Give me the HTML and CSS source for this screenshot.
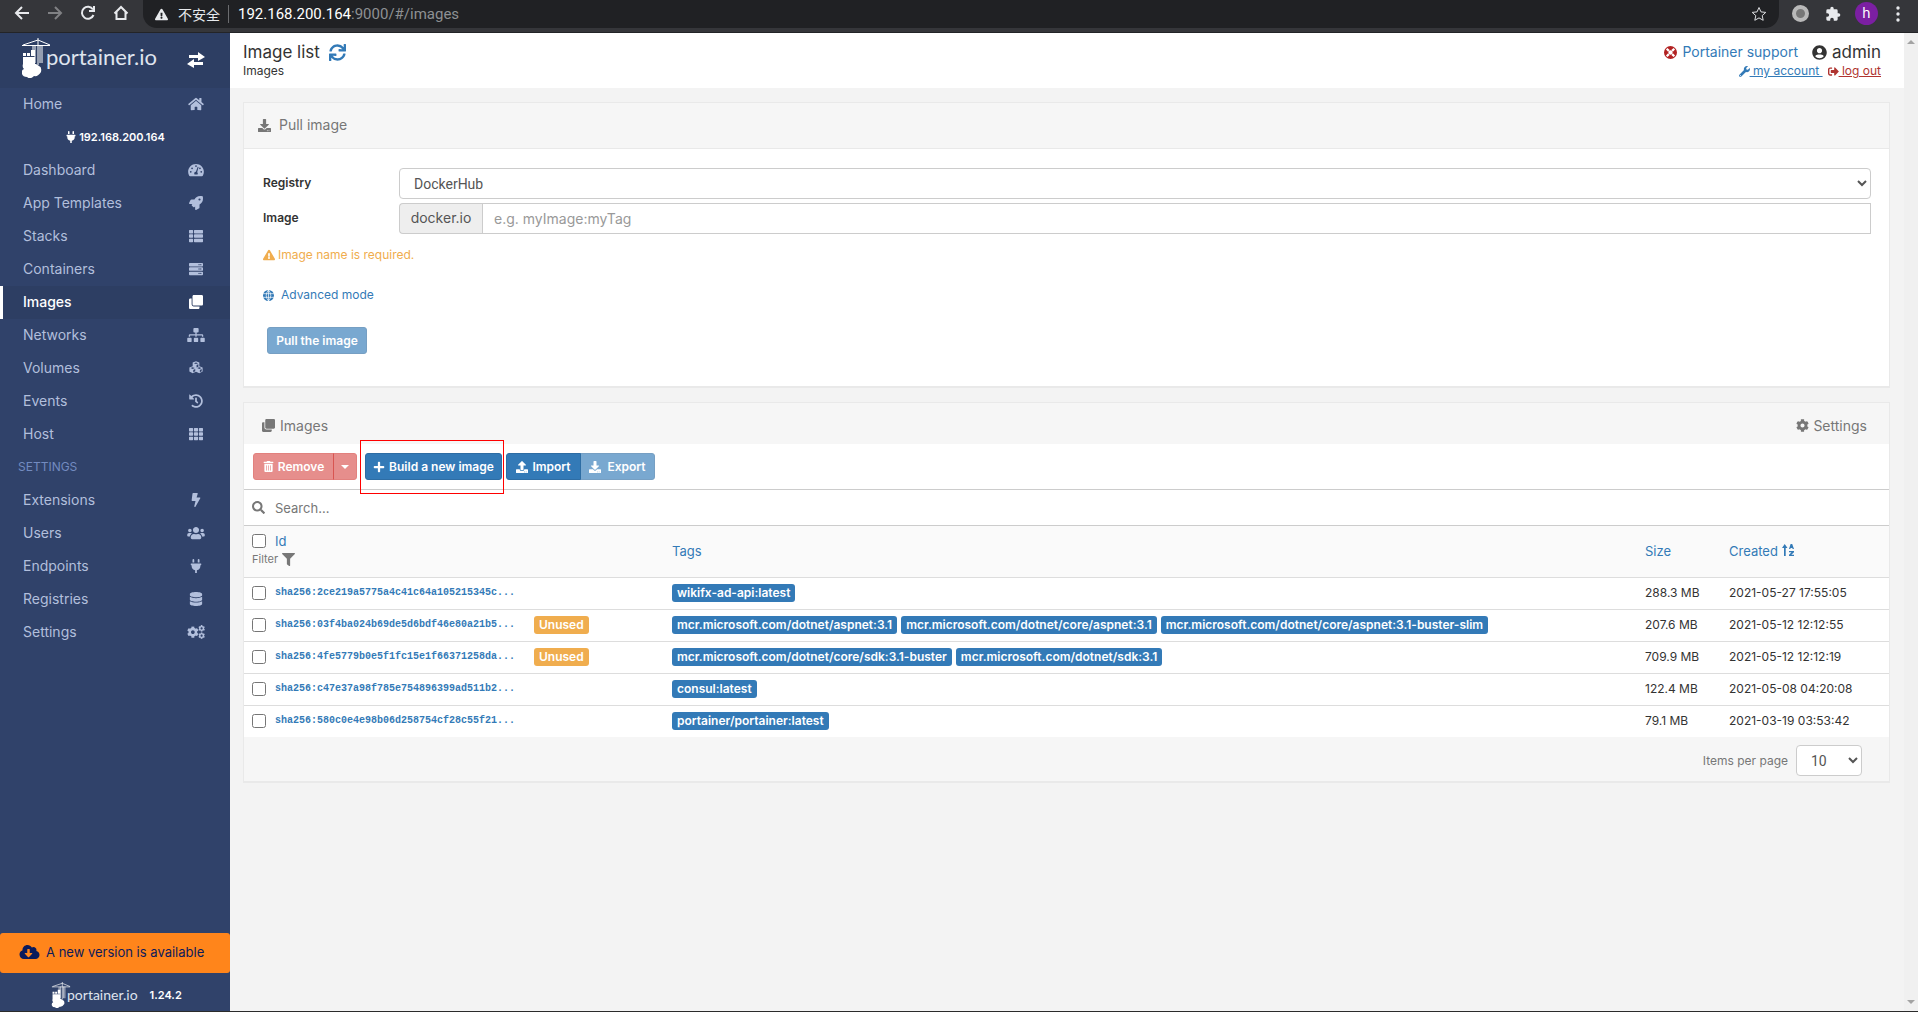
FILE: index.html
```html
<!DOCTYPE html>
<html lang="en">
<head>
<meta charset="utf-8">
<title>Portainer</title>
<link rel="stylesheet" href="styles.css">
</head>
<body>
<svg class="sprite" aria-hidden="true">
  <symbol id="home" viewBox="0 0 576 512"><path d="M280.37 148.26L96 300.11V464a16 16 0 0 0 16 16l112.06-.29a16 16 0 0 0 15.92-16V368a16 16 0 0 1 16-16h64a16 16 0 0 1 16 16v95.64a16 16 0 0 0 16 16.05L464 480a16 16 0 0 0 16-16V300L295.67 148.26a12.19 12.19 0 0 0-15.3 0zM571.6 251.47L488 182.56V44.05a12 12 0 0 0-12-12h-56a12 12 0 0 0-12 12v72.61L318.47 43a48 48 0 0 0-61 0L4.34 251.47a12 12 0 0 0-1.6 16.9l25.5 31A12 12 0 0 0 45.15 301l235.22-193.74a12.19 12.19 0 0 1 15.3 0L530.9 301a12 12 0 0 0 16.9-1.6l25.5-31a12 12 0 0 0-1.7-16.93z"/></symbol>
  <symbol id="plug" viewBox="0 0 384 512"><path d="M320 32a32 32 0 0 0-64 0v96h64Zm48 128H16A16 16 0 0 0 0 176v32a16 16 0 0 0 16 16H32v32A160.07 160.07 0 0 0 160 412.8V512h64V412.8A160.07 160.07 0 0 0 352 256V224h16a16 16 0 0 0 16-16V176A16 16 0 0 0 368 160ZM128 32a32 32 0 0 0-64 0v96h64Z"/></symbol>
  <symbol id="dash" viewBox="0 0 576 512"><path fill-rule="evenodd" d="M288 32C129 32 0 161 0 320c0 53 14 102 39 145 6 9 16 15 28 15h442c12 0 22-6 28-15 25-43 39-92 39-145C576 161 447 32 288 32zM96 288a32 32 0 1 1 0 64 32 32 0 0 1 0-64zm48-128a32 32 0 1 1 0 64 32 32 0 0 1 0-64zM288 80a32 32 0 1 1 0 64 32 32 0 0 1 0-64zm192 208a32 32 0 1 1 0 64 32 32 0 0 1 0-64zm-48-128a32 32 0 1 1 0 64 32 32 0 0 1 0-64zM352 140l30 10-52 186c30 20 28 60 14 80H232c-24-48 6-96 52-94z"/></symbol>
  <symbol id="rocket" viewBox="0 0 512 512"><path d="M505.1 19.1c-1.2-5.5-6.7-11-12.2-12.2C460.7 0 435.5 0 410.4 0 307.200 0 245.300 55.200 199 128H94.800c-16.300 0-35.600 11.900-42.900 26.500L2.500 253.300A28.400 28.400 0 0 0 0 264a24 24 0 0 0 24 24h103.800l-22.500 22.500c-11.300 11.300-13 32.200 0 45.200l50.900 50.900c11.200 11.200 32.200 13.200 45.300 0l22.500-22.500V488a24 24 0 0 0 24 24 28.600 28.600 0 0 0 10.700-2.500l98.700-49.400c14.700-7.300 26.600-26.500 26.600-42.900V312.800c72.600-46.300 128-108.400 128-211.100 0-25.200 0-50.400-6.900-82.600zM384 168a40 40 0 1 1 40-40 40 40 0 0 1-40 40z"/></symbol>
  <symbol id="thlist" viewBox="0 0 512 512"><path d="M24 32h102q24 0 24 24v80q0 24-24 24H24q-24 0-24-24V56q0-24 24-24zM206 32h282q24 0 24 24v80q0 24-24 24H206q-24 0-24-24V56q0-24 24-24zM24 192h102q24 0 24 24v80q0 24-24 24H24q-24 0-24-24v-80q0-24 24-24zM206 192h282q24 0 24 24v80q0 24-24 24H206q-24 0-24-24v-80q0-24 24-24zM24 352h102q24 0 24 24v80q0 24-24 24H24q-24 0-24-24v-80q0-24 24-24zM206 352h282q24 0 24 24v80q0 24-24 24H206q-24 0-24-24v-80q0-24 24-24z"/></symbol>
  <symbol id="th" viewBox="0 0 512 512"><path d="M24 32h102q24 0 24 24v80q0 24-24 24H24q-24 0-24-24V56q0-24 24-24zM205 32h102q24 0 24 24v80q0 24-24 24H205q-24 0-24-24V56q0-24 24-24zM386 32h102q24 0 24 24v80q0 24-24 24H386q-24 0-24-24V56q0-24 24-24zM24 192h102q24 0 24 24v80q0 24-24 24H24q-24 0-24-24v-80q0-24 24-24zM205 192h102q24 0 24 24v80q0 24-24 24H205q-24 0-24-24v-80q0-24 24-24zM386 192h102q24 0 24 24v80q0 24-24 24H386q-24 0-24-24v-80q0-24 24-24zM24 352h102q24 0 24 24v80q0 24-24 24H24q-24 0-24-24v-80q0-24 24-24zM205 352h102q24 0 24 24v80q0 24-24 24H205q-24 0-24-24v-80q0-24 24-24zM386 352h102q24 0 24 24v80q0 24-24 24H386q-24 0-24-24v-80q0-24 24-24z"/></symbol>
  <symbol id="server" viewBox="0 0 512 512"><path fill-rule="evenodd" d="M32 32h448a32 32 0 0 1 32 32v64a32 32 0 0 1-32 32H32a32 32 0 0 1-32-32V64a32 32 0 0 1 32-32zM432 72a24 24 0 1 0 0 48 24 24 0 0 0 0-48zm-64 0a24 24 0 1 0 0 48 24 24 0 0 0 0-48zM32 192h448a32 32 0 0 1 32 32v64a32 32 0 0 1-32 32H32a32 32 0 0 1-32-32v-64a32 32 0 0 1 32-32zm400 40a24 24 0 1 0 0 48 24 24 0 0 0 0-48zm-64 0a24 24 0 1 0 0 48 24 24 0 0 0 0-48zM32 352h448a32 32 0 0 1 32 32v64a32 32 0 0 1-32 32H32a32 32 0 0 1-32-32v-64a32 32 0 0 1 32-32zm400 40a24 24 0 1 0 0 48 24 24 0 0 0 0-48zm-64 0a24 24 0 1 0 0 48 24 24 0 0 0 0-48z"/></symbol>
  <symbol id="clone" viewBox="0 0 512 512"><path d="M464 0c26.510 0 48 21.490 48 48v288c0 26.510-21.490 48-48 48H176c-26.510 0-48-21.490-48-48V48c0-26.510 21.490-48 48-48h288M176 416c-44.112 0-80-35.888-80-80V128H48c-26.510 0-48 21.490-48 48v288c0 26.510 21.490 48 48 48h288c26.510 0 48-21.490 48-48v-48H176z"/></symbol>
  <symbol id="sitemap" viewBox="0 0 640 512"><path d="M128 352H32q-32 0-32 32v96q0 32 32 32h96q32 0 32-32v-96q0-32-32-32zm-24-80h192v48h48v-48h192v48h48v-57q0-39-39-39H344v-64h40q32 0 32-32V32q0-32-32-32H256q-32 0-32 32v96q0 32 32 32h40v64H95q-39 0-39 39v57h48zm264 80h-96q-32 0-32 32v96q0 32 32 32h96q32 0 32-32v-96q0-32-32-32zm240 0h-96q-32 0-32 32v96q0 32 32 32h96q32 0 32-32v-96q0-32-32-32z"/></symbol>
  <symbol id="cubes" viewBox="0 0 512 512"><path fill-rule="evenodd" d="M256 10l122 48v132l120 48v150l-120 60-122-58-122 58-120-60V238l120-48V58zM256 52l-76 28 76 30 76-30zM276 150v92l66-30v-92zM134 226l-78 30 78 32 78-32zM378 226l-78 30 78 32 78-32zM156 326v84l72-36v-80zM398 326v84l66-34v-80z"/></symbol>
  <symbol id="history" viewBox="0 0 512 512"><path d="M504 255.531c.253 136.640-111.180 248.372-247.820 248.468-59.015.042-113.223-20.530-155.822-54.911-11.077-8.940-11.905-25.541-1.839-35.607l11.267-11.267c8.609-8.609 22.353-9.551 31.891-1.984C173.062 425.135 212.781 440 256 440c101.705 0 184-82.311 184-184 0-101.705-82.311-184-184-184-48.814 0-93.149 18.969-126.068 49.932l50.754 50.754c10.080 10.080 2.941 27.314-11.313 27.314H24c-8.837 0-16-7.163-16-16V38.627c0-14.254 17.234-21.393 27.314-11.314l49.372 49.372C129.209 34.136 189.552 8 256 8c136.810 0 247.747 110.780 248 247.531zm-180.912 78.784l9.823-12.630c8.138-10.463 6.253-25.542-4.210-33.679L288 256.349V152c0-13.255-10.745-24-24-24h-16c-13.255 0-24 10.745-24 24v135.651l65.409 50.874c10.463 8.137 25.541 6.253 33.679-4.210z"/></symbol>
  <symbol id="bolt" viewBox="0 0 320 512"><path d="M296 160H180.600l42.600-129.800C227.200 15 215.700 0 200 0H56C44 0 33.800 8.900 32.200 20.800l-32 240C-1.700 275.200 9.500 288 24 288h118.700L96.600 482.500c-3.600 15.200 8 29.500 23.300 29.500 8.400 0 16.400-4.400 20.800-12l176-304c9.300-15.900-2.200-36-20.700-36z"/></symbol>
  <symbol id="users" viewBox="0 0 640 512"><path d="M96 224c35.300 0 64-28.700 64-64s-28.700-64-64-64-64 28.700-64 64 28.700 64 64 64zm448 0c35.300 0 64-28.700 64-64s-28.700-64-64-64-64 28.700-64 64 28.700 64 64 64zm32 32h-64c-17.600 0-33.500 7.100-45.100 18.600 40.300 22.100 68.900 62 75.100 109.400h66c17.700 0 32-14.300 32-32v-32c0-35.300-28.700-64-64-64zm-256 0c61.900 0 112-50.100 112-112S381.900 32 320 32 208 82.100 208 144s50.100 112 112 112zm76.800 32h-8.300c-20.800 10-43.900 16-68.500 16s-47.600-6-68.500-16h-8.300C179.600 288 128 339.600 128 403.200V432c0 26.500 21.500 48 48 48h288c26.500 0 48-21.500 48-48v-28.800c0-63.600-51.600-115.200-115.200-115.200zm-223.700-13.400C161.500 263.100 145.600 256 128 256H64c-35.300 0-64 28.700-64 64v32c0 17.700 14.300 32 32 32h65.900c6.300-47.400 34.900-87.300 75.200-109.400z"/></symbol>
  <symbol id="database" viewBox="0 0 448 512"><path d="M448 73.143v45.714C448 159.143 347.667 192 224 192S0 159.143 0 118.857V73.143C0 32.857 100.333 0 224 0s224 32.857 224 73.143zM448 176v102.857C448 319.143 347.667 352 224 352S0 319.143 0 278.857V176c48.125 33.143 136.208 48.572 224 48.572S399.874 209.143 448 176zm0 160v102.857C448 479.143 347.667 512 224 512S0 479.143 0 438.857V336c48.125 33.143 136.208 48.572 224 48.572S399.874 369.143 448 336z"/></symbol>
  <symbol id="cog" viewBox="0 0 512 512"><path d="M487.400 315.700l-42.600-24.600c4.300-23.200 4.300-47 0-70.200l42.600-24.600c4.900-2.800 7.100-8.600 5.500-14-11.100-35.600-30-67.800-54.700-94.600-3.800-4.100-10-5.100-14.800-2.300L380.800 110c-17.900-15.400-38.500-27.300-60.800-35.100V25.800c0-5.600-3.900-10.500-9.400-11.700-36.700-8.200-74.300-7.800-109.200 0-5.500 1.200-9.400 6.100-9.400 11.700V75c-22.200 7.900-42.800 19.800-60.800 35.100L88.700 85.500c-4.900-2.800-11-1.900-14.800 2.300-24.700 26.700-43.600 58.900-54.700 94.600-1.700 5.400.6 11.200 5.500 14L67.300 221c-4.300 23.200-4.300 47 0 70.200l-42.600 24.600c-4.900 2.800-7.100 8.600-5.500 14 11.100 35.600 30 67.800 54.700 94.600 3.800 4.100 10 5.100 14.800 2.300l42.600-24.600c17.900 15.400 38.500 27.300 60.800 35.100v49.200c0 5.600 3.900 10.500 9.400 11.700 36.700 8.200 74.300 7.800 109.200 0 5.500-1.200 9.400-6.100 9.400-11.700v-49.200c22.200-7.900 42.800-19.800 60.800-35.100l42.600 24.600c4.900 2.800 11 1.900 14.800-2.300 24.700-26.700 43.600-58.900 54.700-94.600 1.500-5.500-.7-11.300-5.600-14.100zM256 336c-44.100 0-80-35.900-80-80s35.900-80 80-80 80 35.900 80 80-35.900 80-80 80z"/></symbol>
  <symbol id="cogs" viewBox="0 0 640 512"><use href="#cog" x="-10" y="46" width="430" height="430"/><use href="#cog" x="400" y="0" width="250" height="250"/><use href="#cog" x="400" y="264" width="250" height="250"/></symbol>
  <symbol id="download" viewBox="0 0 512 512"><path d="M216 0h80c13.300 0 24 10.700 24 24v168h87.700c17.800 0 26.700 21.500 14.100 34.100L269.700 378.300c-7.500 7.500-19.800 7.500-27.300 0L90.100 226.100c-12.600-12.600-3.700-34.100 14.100-34.100H192V24c0-13.300 10.700-24 24-24zm296 376v112c0 13.300-10.700 24-24 24H24c-13.300 0-24-10.700-24-24V376c0-13.300 10.700-24 24-24h146.700l49 49c20.100 20.100 52.500 20.100 72.600 0l49-49H488c13.300 0 24 10.700 24 24zm-124 88c0-11-9-20-20-20s-20 9-20 20 9 20 20 20 20-9 20-20zm64 0c0-11-9-20-20-20s-20 9-20 20 9 20 20 20 20-9 20-20z"/></symbol>
  <symbol id="upload" viewBox="0 0 512 512"><path d="M296 384h-80c-13.300 0-24-10.700-24-24V192h-87.700c-17.800 0-26.700-21.500-14.100-34.100L242.300 5.700c7.500-7.500 19.800-7.500 27.300 0l152.200 152.200c12.600 12.600 3.700 34.100-14.100 34.100H320v168c0 13.300-10.700 24-24 24zm216-8v112c0 13.300-10.700 24-24 24H24c-13.300 0-24-10.700-24-24V376c0-13.300 10.700-24 24-24h136v8c0 30.900 25.100 56 56 56h80c30.900 0 56-25.100 56-56v-8h136c13.300 0 24 10.700 24 24zm-124 88c0-11-9-20-20-20s-20 9-20 20 9 20 20 20 20-9 20-20zm64 0c0-11-9-20-20-20s-20 9-20 20 9 20 20 20 20-9 20-20z"/></symbol>
  <symbol id="search" viewBox="0 0 512 512"><path d="M505 442.700L405.300 343c-4.500-4.500-10.600-7-17-7H372c27.600-35.300 44-79.700 44-128C416 93.100 322.900 0 208 0S0 93.100 0 208s93.100 208 208 208c48.300 0 92.700-16.400 128-44v16.300c0 6.400 2.500 12.500 7 17l99.700 99.700c9.400 9.400 24.600 9.400 33.900 0l28.300-28.300c9.400-9.400 9.400-24.600.1-34zM208 336c-70.700 0-128-57.200-128-128 0-70.700 57.200-128 128-128 70.700 0 128 57.200 128 128 0 70.700-57.200 128-128 128z"/></symbol>
  <symbol id="filter" viewBox="0 0 512 512"><path d="M487.976 0H24.028C2.710 0-8.047 25.866 7.058 40.971L192 225.941V432c0 7.831 3.821 15.170 10.237 19.662l80 55.980C298.020 518.690 320 507.493 320 487.980V225.941l184.947-184.970C520.021 25.896 509.338 0 487.976 0z"/></symbol>
  <symbol id="plus" viewBox="0 0 448 512"><path d="M416 208H272V64c0-17.670-14.330-32-32-32h-32c-17.670 0-32 14.330-32 32v144H32c-17.670 0-32 14.330-32 32v32c0 17.670 14.330 32 32 32h144v144c0 17.670 14.330 32 32 32h32c17.670 0 32-14.330 32-32V304h144c17.670 0 32-14.330 32-32v-32c0-17.670-14.330-32-32-32z"/></symbol>
  <symbol id="trash" viewBox="0 0 448 512"><path d="M32 464a48 48 0 0 0 48 48h288a48 48 0 0 0 48-48V128H32zm272-256a16 16 0 0 1 32 0v224a16 16 0 0 1-32 0zm-96 0a16 16 0 0 1 32 0v224a16 16 0 0 1-32 0zm-96 0a16 16 0 0 1 32 0v224a16 16 0 0 1-32 0zM432 32H312l-9.400-18.700A24 24 0 0 0 281.100 0H166.800a23.720 23.720 0 0 0-21.400 13.300L136 32H16A16 16 0 0 0 0 48v32a16 16 0 0 0 16 16h416a16 16 0 0 0 16-16V48a16 16 0 0 0-16-16z"/></symbol>
  <symbol id="warning" viewBox="0 0 576 512"><path d="M569.517 440.013C587.975 472.007 564.806 512 527.940 512H48.054c-36.937 0-59.999-40.055-41.577-71.987L246.423 23.985c18.467-32.009 64.720-31.951 83.154 0l239.940 416.028zM288 354c-25.405 0-46 20.595-46 46s20.595 46 46 46 46-20.595 46-46-20.595-46-46-46zm-43.673-165.346l7.418 136c.347 6.364 5.609 11.346 11.982 11.346h48.546c6.373 0 11.635-4.982 11.982-11.346l7.418-136c.375-6.874-5.098-12.654-11.982-12.654h-63.383c-6.884 0-12.356 5.780-11.981 12.654z"/></symbol>
  <symbol id="wrench" viewBox="0 0 512 512"><path d="M507.730 109.100c-2.240-9.030-13.540-12.090-20.120-5.510l-74.360 74.360-67.880-11.310-11.310-67.880 74.360-74.360c6.620-6.620 3.430-17.900-5.660-20.160-47.380-11.740-99.550.91-136.580 37.930-39.640 39.640-50.550 97.100-34.050 147.200L18.740 402.760c-24.990 24.990-24.990 65.510 0 90.500 24.990 24.990 65.510 24.990 90.500 0l213.210-213.210c50.120 16.710 107.470 5.680 147.370-34.220 37.070-37.070 49.700-89.320 37.910-136.730zM64 472c-13.250 0-24-10.750-24-24 0-13.260 10.750-24 24-24s24 10.740 24 24c0 13.250-10.750 24-24 24z"/></symbol>
  <symbol id="signout" viewBox="0 0 512 512"><path d="M497 273L329 441c-15 15-41 4.500-41-17v-96H152c-13.300 0-24-10.700-24-24v-96c0-13.300 10.700-24 24-24h136V88c0-21.400 25.900-32 41-17l168 168c9.300 9.400 9.300 24.600 0 34zM192 436v-40c0-6.600-5.400-12-12-12H96c-17.700 0-32-14.300-32-32V160c0-17.700 14.300-32 32-32h84c6.600 0 12-5.400 12-12V76c0-6.600-5.400-12-12-12H96c-53 0-96 43-96 96v192c0 53 43 96 96 96h84c6.600 0 12-5.400 12-12z"/></symbol>
  <symbol id="sync" viewBox="0 0 512 512"><path d="M440.650 12.570l4 82.770A247.160 247.160 0 0 0 255.830 8C134.730 8 33.910 94.920 12.290 209.820A12 12 0 0 0 24.090 224h49.050a12 12 0 0 0 11.670-9.260 175.910 175.910 0 0 1 317-56.940l-101.460-4.860a12 12 0 0 0-12.570 12v47.410a12 12 0 0 0 12 12H500a12 12 0 0 0 12-12V12a12 12 0 0 0-12-12h-47.370a12 12 0 0 0-11.980 12.570zM255.830 432a175.610 175.610 0 0 1-146-77.800l101.800 4.870a12 12 0 0 0 12.570-12v-47.400a12 12 0 0 0-12-12H12a12 12 0 0 0-12 12V500a12 12 0 0 0 12 12h47.350a12 12 0 0 0 12-12.600l-4.150-82.570A247.170 247.170 0 0 0 255.830 504c121.110 0 221.930-86.920 243.550-201.820a12 12 0 0 0-11.800-14.180h-49.050a12 12 0 0 0-11.670 9.260A175.860 175.860 0 0 1 255.830 432z"/></symbol>
  <symbol id="user" viewBox="0 0 496 512"><path d="M248 8C111 8 0 119 0 256s111 248 248 248 248-111 248-248S385 8 248 8zm0 96c48.600 0 88 39.400 88 88s-39.400 88-88 88-88-39.400-88-88 39.400-88 88-88zm0 344c-58.700 0-111.300-26.600-146.500-68.200 18.800-35.400 55.600-59.800 98.500-59.800 2.400 0 4.800.4 7.100 1.100 13 4.200 26.600 6.900 40.900 6.900 14.300 0 28-2.700 40.900-6.900 2.300-.7 4.700-1.100 7.100-1.100 42.900 0 79.700 24.400 98.500 59.800C359.300 421.400 306.700 448 248 448z"/></symbol>
  <symbol id="cloud" viewBox="0 0 640 512"><path d="M537.600 226.600c4.100-10.700 6.400-22.400 6.400-34.600 0-53-43-96-96-96-19.700 0-38.100 6-53.300 16.200C367 64.200 315.300 32 256 32c-88.400 0-160 71.600-160 160 0 2.700.1 5.400.2 8.100C40.200 219.800 0 273.200 0 336c0 79.500 64.500 144 144 144h368c70.700 0 128-57.300 128-128 0-61.900-44-113.600-102.400-125.400zm-132.900 88.700L299.300 420.700c-6.200 6.200-16.400 6.200-22.600 0L171.300 315.300c-10.100-10.100-2.900-27.300 11.300-27.300H248V176c0-8.800 7.200-16 16-16h48c8.800 0 16 7.200 16 16v112h65.400c14.200 0 21.400 17.200 11.300 27.300z"/></symbol>
  <symbol id="ring" viewBox="0 0 24 24"><circle cx="12" cy="12" r="8" fill="none" stroke="currentColor" stroke-width="8"/><path stroke="#fff" stroke-width="4" d="M5 5l4 4M19 5l-4 4M5 19l4-4M19 19l-4-4"/></symbol>
  <symbol id="globe" viewBox="0 0 24 24"><circle cx="12" cy="12" r="12"/><path fill="none" stroke="#fff" stroke-width="1.500" d="M0 8h24M0 16h24M12 0v24M12 0q-10 12 0 24M12 0q10 12 0 24"/></symbol>
  <symbol id="swap" viewBox="0 0 18 16"><path d="M2 3h9V0l7 5-7 4V6H2zM16 10H7V7l-7 5 7 4v-3h9z"/></symbol>
  <symbol id="sort" viewBox="0 0 12 12"><path d="M2 12V4H0l2.700-4 2.800 4H3.700v8zM7 5l1.600-5h1.600L12 5h-1.400l-.3-1H8.600l-.3 1zM7 7h5v1.300L9.300 10.800H12V12H7v-1.300l2.500-2.500H7z"/></symbol>
  <symbol id="crane" viewBox="0 0 28 40"><path fill="none" stroke="currentColor" stroke-width="1" d="M16 0v27M13 7v18M18 7v18M20 7v18M0 7.500h28M1 7l15-5 12 5M11 8v5"/><path d="M1 15h3v3H1zM5 15h3v3H5zM9 12h4v6H9zM1 19h12v7H1zM1 26h13l3 2q3 1 2 6-3 5-7 4-4 4-7 1-4 0-5-3-1-4 2-5-2-2-1-5z"/></symbol>
</svg>

<header class="browser">
  <nav class="browser-nav">
    <svg viewBox="0 0 16 16"><path d="M15 8H2M8 2L2 8l6 6"/></svg>
    <svg class="dim" viewBox="0 0 16 16"><path d="M1 8h13M8 2l6 6-6 6"/></svg>
    <svg viewBox="0 0 16 16"><path d="M13.500 10A6 6 0 1 1 13 4.500M14 1v5H9"/></svg>
    <svg viewBox="0 0 16 16"><path d="M1.500 8.500L8 2l6.500 6.500M3.500 7v7h9V7"/></svg>
  </nav>
  <div class="address">
    <svg class="i13"><use href="#warning"/></svg>
    <span class="unsafe">不安全</span>
    <span class="url"><b>192.168.200.164</b>:9000/#/images</span>
    <svg class="star" viewBox="0 0 16 16"><path d="M8 1.500l2 4.400 4.800.5-3.600 3.200 1 4.700L8 11.900l-4.200 2.400 1-4.700L1.200 6.400 6 5.900z"/></svg>
  </div>
  <div class="browser-ext">
    <span class="circle"></span>
    <svg class="puzzle" viewBox="0 0 24 24"><path d="M20.500 11H19V7a2 2 0 0 0-2-2h-4V3.500a2.500 2.500 0 0 0-5 0V5H4a2 2 0 0 0-2 2v3.800h1.500a2.700 2.700 0 0 1 0 5.400H2V20a2 2 0 0 0 2 2h3.800v-1.500a2.700 2.700 0 0 1 5.400 0V22H17a2 2 0 0 0 2-2v-4h1.500a2.500 2.500 0 0 0 0-5z"/></svg>
    <span class="avatar">h</span>
    <svg class="dots" viewBox="0 0 4 16"><circle cx="2" cy="2" r="1.700"/><circle cx="2" cy="8" r="1.700"/><circle cx="2" cy="14" r="1.700"/></svg>
  </div>
</header>

<div class="app">
  <aside class="sidebar">
    <div class="brand">
      <svg class="crane"><use href="#crane"/></svg><span class="brand-name">portainer.io</span>
      <svg class="swap"><use href="#swap"/></svg>
    </div>
    <nav class="menu">
      <a href="#home">Home <svg><use href="#home"/></svg></a>
      <div class="endpoint"><svg class="i12"><use href="#plug"/></svg>192.168.200.164</div>
      <a href="#dashboard">Dashboard <svg><use href="#dash"/></svg></a>
      <a href="#templates">App Templates <svg><use href="#rocket"/></svg></a>
      <a href="#stacks">Stacks <svg><use href="#thlist"/></svg></a>
      <a href="#containers">Containers <svg><use href="#server"/></svg></a>
      <a href="#images" class="active">Images <svg><use href="#clone"/></svg></a>
      <a href="#networks">Networks <svg><use href="#sitemap"/></svg></a>
      <a href="#volumes">Volumes <svg><use href="#cubes"/></svg></a>
      <a href="#events">Events <svg><use href="#history"/></svg></a>
      <a href="#host">Host <svg><use href="#th"/></svg></a>
      <div class="menu-title">SETTINGS</div>
      <a href="#extensions">Extensions <svg><use href="#bolt"/></svg></a>
      <a href="#users">Users <svg><use href="#users"/></svg></a>
      <a href="#endpoints">Endpoints <svg><use href="#plug"/></svg></a>
      <a href="#registries">Registries <svg><use href="#database"/></svg></a>
      <a href="#settings">Settings <svg><use href="#cogs"/></svg></a>
    </nav>
    <a class="update" href="#update"><svg><use href="#cloud"/></svg>A new version is available</a>
    <footer class="side-foot">
      <svg class="crane"><use href="#crane"/></svg><span class="brand-name">portainer.io</span><span class="version">1.24.2</span>
    </footer>
  </aside>

  <main>
    <header class="page-head">
      <div>
        <h1>Image list <a href="#refresh" aria-label="Refresh"><svg><use href="#sync"/></svg></a></h1>
        <p>Images</p>
      </div>
      <div class="account">
        <div class="account-top">
          <a class="support" href="#support"><svg class="red i13"><use href="#ring"/></svg>Portainer support</a>
          <span class="who"><svg><use href="#user"/></svg>admin</span>
        </div>
        <div class="account-links">
          <a href="#account"><svg class="i11"><use href="#wrench"/></svg><u>&nbsp;my account&nbsp;</u></a>
          <a href="#logout" class="red"><svg class="i11"><use href="#signout"/></svg><u>&nbsp;log out</u></a>
        </div>
      </div>
    </header>

    <section class="card pull">
      <h2><svg class="i13"><use href="#download"/></svg>Pull image</h2>
      <form>
        <div class="field">
          <label for="registry">Registry</label>
          <select id="registry"><option>DockerHub</option></select>
        </div>
        <div class="field">
          <label for="image">Image</label>
          <div class="group"><span>docker.io</span><input id="image" type="text" placeholder="e.g. myImage:myTag"></div>
        </div>
        <p class="warn"><svg class="i12"><use href="#warning"/></svg>Image name is required.</p>
        <a class="advanced" href="#advanced"><svg class="i11"><use href="#globe"/></svg>Advanced mode</a>
        <button type="button" class="btn blue" disabled>Pull the image</button>
      </form>
    </section>

    <section class="card list">
      <div class="list-head">
        <h2><svg class="i13"><use href="#clone"/></svg>Images</h2>
        <a href="#table-settings"><svg class="i13"><use href="#cog"/></svg>Settings</a>
      </div>
      <div class="toolbar">
        <div class="btns remove">
          <button type="button" class="btn danger" disabled><svg class="i11"><use href="#trash"/></svg>Remove</button>
          <button type="button" class="btn danger caret" disabled aria-label="More remove options"><i></i></button>
        </div>
        <div class="build">
          <button type="button" class="btn blue"><svg class="i12"><use href="#plus"/></svg>Build a new image</button>
          <span class="mark"></span>
        </div>
        <div class="btns">
          <button type="button" class="btn blue"><svg class="i12"><use href="#upload"/></svg>Import</button>
          <button type="button" class="btn blue export" disabled><svg class="i12"><use href="#download"/></svg>Export</button>
        </div>
      </div>
      <label class="search"><svg class="i13"><use href="#search"/></svg><input type="text" placeholder="Search..." aria-label="Search"></label>
      <table>
        <colgroup><col class="c-id"><col><col class="c-size"><col class="c-date"></colgroup>
        <thead>
          <tr>
            <th><div class="id-cell"><input type="checkbox" aria-label="Select all"><a href="#id">Id</a></div><div class="filter">Filter<svg class="i13"><use href="#filter"/></svg></div></th>
            <th><a href="#tags">Tags</a></th>
            <th><a href="#size">Size</a></th>
            <th><a href="#created">Created <svg class="i12"><use href="#sort"/></svg></a></th>
          </tr>
        </thead>
        <tbody>
          <tr>
            <td><div class="id-cell"><input type="checkbox" aria-label="Select image"><a href="#i1">sha256:2ce219a5775a4c41c64a105215345c...</a></div></td>
            <td><div class="tags"><span>wikifx-ad-api:latest</span></div></td>
            <td>288.3 MB</td><td>2021-05-27 17:55:05</td>
          </tr>
          <tr>
            <td><div class="id-cell"><input type="checkbox" aria-label="Select image"><a href="#i2">sha256:03f4ba024b69de5d6bdf46e80a21b5...</a><span class="unused">Unused</span></div></td>
            <td><div class="tags"><span>mcr.microsoft.com/dotnet/aspnet:3.1</span><span>mcr.microsoft.com/dotnet/core/aspnet:3.1</span><span>mcr.microsoft.com/dotnet/core/aspnet:3.1-buster-slim</span></div></td>
            <td>207.6 MB</td><td>2021-05-12 12:12:55</td>
          </tr>
          <tr>
            <td><div class="id-cell"><input type="checkbox" aria-label="Select image"><a href="#i3">sha256:4fe5779b0e5f1fc15e1f66371258da...</a><span class="unused">Unused</span></div></td>
            <td><div class="tags"><span>mcr.microsoft.com/dotnet/core/sdk:3.1-buster</span><span>mcr.microsoft.com/dotnet/sdk:3.1</span></div></td>
            <td>709.9 MB</td><td>2021-05-12 12:12:19</td>
          </tr>
          <tr>
            <td><div class="id-cell"><input type="checkbox" aria-label="Select image"><a href="#i4">sha256:c47e37a98f785e754896399ad511b2...</a></div></td>
            <td><div class="tags"><span>consul:latest</span></div></td>
            <td>122.4 MB</td><td>2021-05-08 04:20:08</td>
          </tr>
          <tr>
            <td><div class="id-cell"><input type="checkbox" aria-label="Select image"><a href="#i5">sha256:580c0e4e98b06d258754cf28c55f21...</a></div></td>
            <td><div class="tags"><span>portainer/portainer:latest</span></div></td>
            <td>79.1 MB</td><td>2021-03-19 03:53:42</td>
          </tr>
        </tbody>
      </table>
      <footer class="list-foot">
        <label for="per-page">Items per page</label>
        <select id="per-page"><option>10</option></select>
      </footer>
    </section>
  </main>
  <div class="scrollbar"><i class="up"></i><i class="down"></i></div>
</div>
</body>
</html>
```
FILE: styles.css
```css
* { box-sizing: border-box; }
body {
  margin: 0;
  height: 100vh;
  display: flex;
  flex-direction: column;
  font: 14px/18px Inter, "Liberation Sans", sans-serif;
  color: #333;
  background: #f3f3f3;
  border-bottom: 1px solid #2b2b2b;
}
h1, h2, p { margin: 0; font-weight: 400; }
a { color: #337ab7; text-decoration: none; }
svg { fill: currentColor; flex: none; }
button, input, select { font: inherit; margin: 0; }
.sprite { position: absolute; width: 0; height: 0; }
.i11 { width: 11px; height: 11px; }
.i12 { width: 12px; height: 12px; }
.i13 { width: 13px; height: 13px; }
.red { color: #b22222; }

/* browser bar */
.browser {
  display: flex;
  height: 33px;
  flex: none;
  background: #35363a;
  border-bottom: 1px solid #232427;
  color: #e8eaed;
}
.browser-nav { display: flex; gap: 17px; padding: 5px 0 0 14px; width: 143px; }
.browser-nav svg { width: 16px; height: 16px; fill: none; stroke: #e8eaed; stroke-width: 2; }
.browser-nav .dim { stroke: #808184; }
.address {
  flex: 1;
  height: 28px;
  display: flex;
  align-items: center;
  padding: 0 12px;
  border-radius: 0 0 14px 14px;
  background: #202124;
}
.unsafe {
  font: 14px/18px "Noto Sans CJK SC", sans-serif;
  margin-left: 10px;
  padding-right: 8px;
  border-right: 1px solid #6b6c6f;
}
.url { font: 15px/18px Roboto, sans-serif; color: #8e9093; margin-left: 9px; flex: 1; }
.url b { font-weight: 400; color: #fff; }
.star { width: 16px; height: 16px; fill: none; stroke: #dcdde0; stroke-width: 1; }
.browser-ext { display: flex; align-items: center; gap: 16px; height: 27px; padding: 0 18px 0 13px; }
.circle { width: 17px; height: 17px; border: 4px solid #b9b9b9; border-radius: 50%; background: #777; }
.puzzle { width: 16px; height: 16px; }
.avatar { width: 23px; height: 23px; border-radius: 50%; background: #7b1fa2; color: #fff; text-align: center; line-height: 22px; margin: 0 2px 0 -2px; }
.dots { width: 4px; height: 16px; }

.app { display: flex; flex: 1; min-height: 0; }

/* sidebar */
.sidebar { width: 230px; flex: none; display: flex; flex-direction: column; background: #30426a; color: #fff; }
.brand { height: 55px; display: flex; align-items: center; padding: 0 25px 5px 22px; background: #2d3e63; }
.crane { width: 28px; height: 40px; }
.brand-name { font-family: Lato, sans-serif; font-size: 22px; line-height: 24px; padding-bottom: 3px; color: #dfe4ee; margin: 0 0 0 -4px; }
.swap { width: 18px; height: 16px; margin: 3px 0 0 auto; }
.menu { flex: 1; }
.menu a { display: flex; align-items: center; justify-content: space-between; height: 33px; padding: 0 25px 2px 20px; border-left: 3px solid transparent; color: #b2bfdc; }
.menu a svg { width: 18px; height: 14px; }
.menu a.active { background: #2d3e63; border-color: #fff; color: #fff; font-weight: 500; }
.endpoint { display: flex; align-items: center; justify-content: center; gap: 2px; height: 33px; padding-bottom: 2px; font-size: 11px; font-weight: 600; }
.menu-title { height: 33px; padding: 7px 18px; font-size: 12px; color: #738bc0; }
.update { display: flex; align-items: center; gap: 6px; height: 40px; padding: 0 0 2px 19px; border-radius: 3px; background: #ff851b; color: #0b1b5c; font-size: 13px; }
.update svg { width: 21px; height: 16px; }
.side-foot { display: flex; align-items: center; height: 38px; padding: 5px 0 0 51px; }
.side-foot .crane { width: 20px; height: 26px; }
.side-foot .brand-name { font-size: 14px; line-height: 18px; padding: 0; }
.version { margin-left: 12px; font-size: 11px; font-weight: 600; }

/* page */
main { flex: 1; min-width: 0; }
.page-head { display: flex; justify-content: space-between; height: 55px; padding: 9px 23px 0 13px; background: #fff; }
.page-head h1 { display: flex; align-items: center; gap: 9px; font-size: 17px; line-height: 20px; }
.page-head h1 a, .page-head h1 svg { display: block; width: 17px; height: 17px; }
.page-head p { font-size: 12px; line-height: 18px; }
.account-top, .account-links { display: flex; justify-content: flex-end; align-items: center; }
.account-top { gap: 14px; height: 20px; }
.account-links { gap: 5px; height: 18px; font-size: 12px; }
.account a, .who { display: flex; align-items: center; }
.support { gap: 5px; }
.who { gap: 5px; font-size: 17px; }
.who svg { width: 15px; height: 15px; }
.account-links a.red { color: #b03430; }

.card { margin: 14px 14px 13px 13px; border: 1px solid #e9e9e9; border-bottom-width: 2px; background: #fff; }
.card h2 { display: flex; align-items: center; gap: 8px; font-size: 14px; color: #777; }
.pull { margin-bottom: 0; }
.pull h2 { height: 46px; padding: 0 0 1px 14px; background: #f6f6f6; border-bottom: 1px solid #e9e9e9; }
.pull form { padding: 19px 18px 32px 19px; }
.field { display: flex; gap: 8px; margin-bottom: 4px; }
.field label { width: 128px; font-size: 12px; font-weight: 600; line-height: 29px; }
select {
  height: 31px;
  border: 1px solid #ccc;
  border-radius: 4px;
  background: #fff;
  color: #555;
  font: 14px/20px Roboto, sans-serif;
  padding: 0 0 0 10px;
}
.field select { flex: 1; }
.group { flex: 1; display: flex; }
.group span { width: 83px; height: 31px; border: 1px solid #ccc; border-right: 0; border-radius: 4px 0 0 4px; background: #eee; color: #555; text-align: center; line-height: 28px; }
.group input { flex: 1; height: 31px; border: 1px solid #ccc; padding: 0 11px; }
input::placeholder { color: #999; }
.warn { display: flex; align-items: center; gap: 3px; margin-top: 11px; height: 20px; font-size: 12px; color: #f0ad4e; }
.advanced { display: flex; align-items: center; gap: 7px; margin: 20px 0 22px; height: 20px; font-size: 12px; }
.btn {
  display: flex;
  align-items: center;
  justify-content: center;
  gap: 4px;
  height: 27px;
  padding: 0 6px;
  border: 1px solid;
  border-radius: 3px;
  font-size: 12px;
  font-weight: 600;
  color: #fff;
}
.blue { background: #337ab7; border-color: #2e6da4; }
.danger { background: #d9534f; border-color: #d43f3a; }
.btn:disabled { opacity: .65; }
.pull .btn { margin-left: 4px; width: 100px; }

.list-head { display: flex; align-items: center; justify-content: space-between; height: 41px; padding: 4px 22px 0 18px; background: #f6f6f6; }
.list-head h2 { gap: 5px; }
.list-head a { display: flex; align-items: center; gap: 4px; color: #777; }
.toolbar { display: flex; gap: 4px; height: 46px; padding: 9px; border-bottom: 1px solid #ccc; }
.btns { display: flex; }
.btns.remove { margin-right: 4px; }
.btns .btn:first-child { border-radius: 3px 0 0 3px; }
.btns .btn:last-child { border-radius: 0 3px 3px 0; margin-left: -1px; }
.btns .btn { width: 75px; }
.remove .btn:first-child { width: 81px; }
.remove .caret { width: 24px; padding: 0; }
.caret i { border: 4px solid transparent; border-top-color: #fff; border-bottom: 0; }
.build { position: relative; }
.build .btn { width: 137px; }
.mark { position: absolute; inset: -13px -2px -14px -5px; border: 1px solid #f00; }
.export { gap: 6px; }
.search { display: flex; align-items: center; gap: 10px; height: 36px; padding: 0 8px; border-bottom: 1px solid #ccc; color: #777; font-size: 13px; }
.search input { flex: 1; border: 0; outline: 0; padding: 0; background: none; }
.search input::placeholder { color: #777; }

table { width: 100%; border-collapse: collapse; table-layout: fixed; font-size: 13px; }
.c-id { width: 420px; }
.c-size { width: 84px; }
.c-date { width: 168px; }
th { height: 51px; background: #fafafa; text-align: left; font-weight: 400; padding: 0 8px; border-bottom: 1px solid #ddd; }
td { height: 32px; padding: 0 8px; font-size: 12px; border-bottom: 1px solid #ddd; }
tbody tr:last-child td { border-bottom: 0; }
.id-cell { display: flex; align-items: center; height: 16px; }
.id-cell input { width: 14px; height: 14px; margin-right: 9px; }
td .id-cell a { font: bold 10px/16px "Liberation Mono", monospace; width: 259px; }
.filter { display: flex; align-items: center; gap: 4px; height: 20px; font-size: 11px; color: #777; }
.unused, .tags span { height: 18px; border-radius: 3px; padding: 0 5px; background: #337ab7; color: #fff; font-size: 12px; line-height: 17px; font-weight: 600; }
.unused { background: #f0ad4e; }
.tags { display: flex; gap: 4px; white-space: nowrap; }
.list-foot { display: flex; align-items: center; justify-content: flex-end; gap: 8px; height: 44px; padding: 3px 27px 0 0; background: #f6f6f6; font-size: 12px; color: #777; }
.list-foot select { width: 66px; }

.scrollbar { width: 14px; flex: none; display: flex; flex-direction: column; justify-content: space-between; align-items: center; padding: 7px 0; background: #f0f0f0; }
.scrollbar i { border: 4px solid transparent; }
.scrollbar .up { border-top: 0; border-bottom-color: #a3a3a3; }
.scrollbar .down { border-bottom: 0; border-top-color: #a3a3a3; }
```
